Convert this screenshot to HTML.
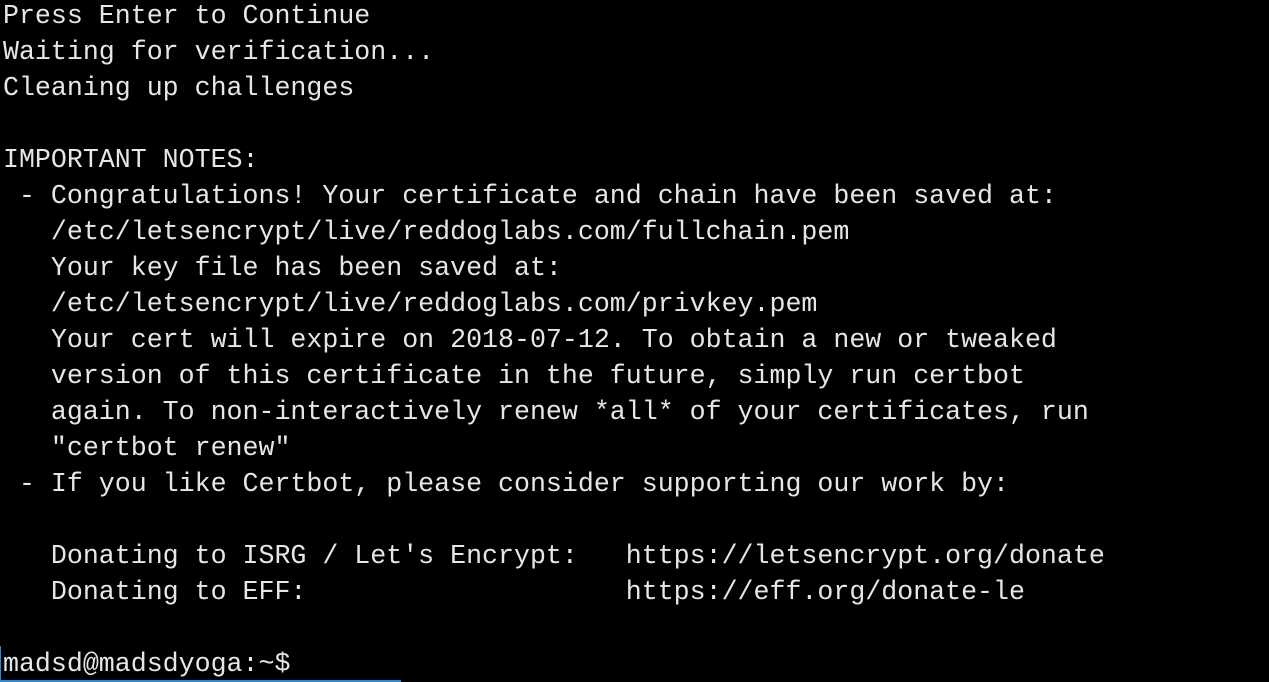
<!DOCTYPE html>
<html><head><style>
html,body{margin:0;padding:0;background:#000;width:1269px;height:682px;overflow:hidden}
pre{position:absolute;left:3px;top:-2px;margin:0;font-family:"Liberation Mono",monospace;font-size:26.62px;line-height:36px;color:#e6e6e6;white-space:pre}
.b{position:absolute;left:0;top:680px;width:401px;height:2px;background:#2b8ad8}
.l{position:absolute;left:0;top:646px;width:1px;height:36px;background:#2b8ad8}
</style></head><body>
<pre>Press Enter to Continue
Waiting for verification...
Cleaning up challenges

IMPORTANT NOTES:
 - Congratulations! Your certificate and chain have been saved at:
   /etc/letsencrypt/live/reddoglabs.com/fullchain.pem
   Your key file has been saved at:
   /etc/letsencrypt/live/reddoglabs.com/privkey.pem
   Your cert will expire on 2018-07-12. To obtain a new or tweaked
   version of this certificate in the future, simply run certbot
   again. To non-interactively renew *all* of your certificates, run
   "certbot renew"
 - If you like Certbot, please consider supporting our work by:

   Donating to ISRG / Let's Encrypt:   https://letsencrypt.org/donate
   Donating to EFF:                    https://eff.org/donate-le

madsd@madsdyoga:~$</pre>
<div class="b"></div><div class="l"></div>
</body></html>
